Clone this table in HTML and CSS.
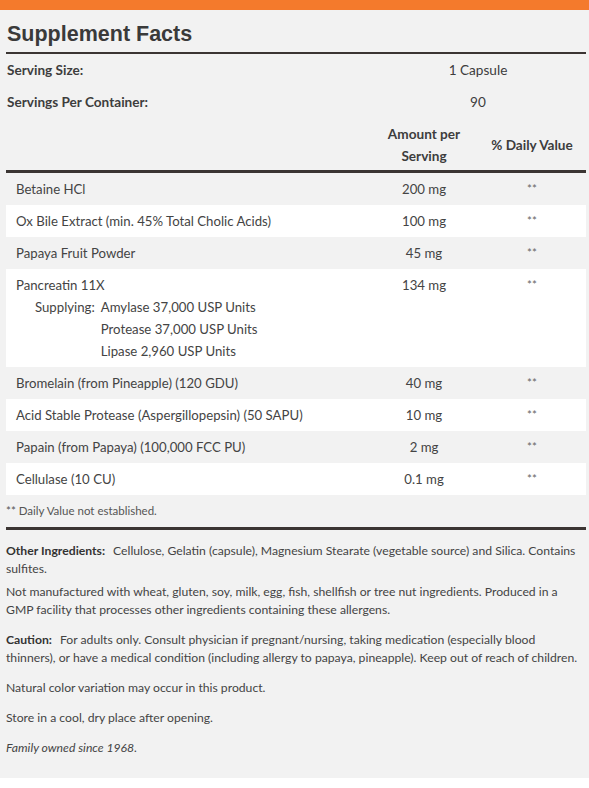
FILE: index.html
```html
<!DOCTYPE html>
<html>
<head>
<meta charset="utf-8">
<link rel="stylesheet" href="styles.css">
</head>
<body>
<div class="topbar"></div>
<div class="panel">
  <h1 class="title">Supplement Facts</h1>
  <div class="facts">
    <div class="serving">
      <div class="label">Serving Size:</div>
      <div class="sval">1 Capsule</div>
    </div>
    <div class="serving">
      <div class="label">Servings Per Container:</div>
      <div class="sval">90</div>
    </div>
    <div class="head">
      <div></div>
      <div class="hcol">Amount per<br>Serving</div>
      <div class="hcol">% Daily Value</div>
    </div>
    <div class="rows">
      <div class="row"><div class="name">Betaine HCl</div><div class="amt">200 mg</div><div class="dv">**</div></div>
      <div class="row"><div class="name">Ox Bile Extract (min. 45% Total Cholic Acids)</div><div class="amt">100 mg</div><div class="dv">**</div></div>
      <div class="row"><div class="name">Papaya Fruit Powder</div><div class="amt">45 mg</div><div class="dv">**</div></div>
      <div class="row"><div class="name">Pancreatin 11X
        <div class="supply"><span class="sup-l">Supplying:</span><span class="sup-r">Amylase 37,000 USP Units<br>Protease 37,000 USP Units<br>Lipase 2,960 USP Units</span></div>
      </div><div class="amt">134 mg</div><div class="dv">**</div></div>
      <div class="row"><div class="name">Bromelain (from Pineapple) (120 GDU)</div><div class="amt">40 mg</div><div class="dv">**</div></div>
      <div class="row"><div class="name">Acid Stable Protease (Aspergillopepsin) (50 SAPU)</div><div class="amt">10 mg</div><div class="dv">**</div></div>
      <div class="row"><div class="name">Papain (from Papaya) (100,000 FCC PU)</div><div class="amt">2 mg</div><div class="dv">**</div></div>
      <div class="row"><div class="name">Cellulase (10 CU)</div><div class="amt">0.1 mg</div><div class="dv">**</div></div>
    </div>
    <div class="footnote">** Daily Value not established.</div>
  </div>
  <div class="notes">
    <p class="tight"><b class="lead">Other Ingredients:</b>Cellulose, Gelatin (capsule), Magnesium Stearate (vegetable source) and Silica. Contains sulfites.</p>
    <p>Not manufactured with wheat, gluten, soy, milk, egg, fish, shellfish or tree nut ingredients. Produced in a GMP facility that processes other ingredients containing these allergens.</p>
    <p><b class="lead">Caution:</b>For adults only. Consult physician if pregnant/nursing, taking medication (especially blood thinners), or have a medical condition (including allergy to papaya, pineapple). Keep out of reach of children.</p>
    <p>Natural color variation may occur in this product.</p>
    <p>Store in a cool, dry place after opening.</p>
    <p class="ital">Family owned since 1968.</p>
  </div>
</div>
</body>
</html>
```
FILE: styles.css
```css
html, body {
  margin: 0;
  padding: 0;
  background: #ffffff;
}
body {
  font-family: "Lato", "Open Sans", sans-serif;
  color: #3d3d3d;
}
.topbar {
  height: 10px;
  background: #f47a2c;
}
.panel {
  background: #f2f2f2;
  padding: 0 3px 21px 6px;
}
.title {
  margin: 0;
  padding: 11px 0 5px 1px;
  font-family: "Liberation Sans", Arial, sans-serif;
  font-weight: 700;
  font-size: 21.5px;
  line-height: 26px;
  color: #3a3a3a;
  border-bottom: 2px solid #3b3533;
}
.serving {
  display: grid;
  grid-template-columns: 1fr 216px;
  height: 32px;
  align-items: center;
  font-size: 13.6px;
}
.label {
  font-weight: 700;
  padding-left: 1px;
}
.sval {
  text-align: center;
}
.head {
  display: grid;
  grid-template-columns: 1fr 108px 108px;
  align-items: center;
  padding: 5px 0 3px;
  font-size: 13.6px;
  line-height: 22px;
  font-weight: 700;
  border-bottom: 3px solid #3b3533;
}
.hcol {
  text-align: center;
}
.row {
  display: grid;
  grid-template-columns: 1fr 108px 108px;
  align-items: start;
  padding: 5px 0;
  font-size: 13.2px;
  line-height: 22px;
  color: #444;
}
.row:nth-child(even) {
  background: #ffffff;
}
.name {
  padding-left: 10px;
}
.amt {
  text-align: center;
}
.dv {
  text-align: center;
  font-size: 11.5px;
  color: #666;
}
.supply {
  display: flex;
  padding-left: 19px;
}
.sup-l {
  margin-right: 6px;
}
.footnote {
  font-size: 11.5px;
  line-height: 16px;
  padding: 8px 0 8px;
  color: #555;
  border-bottom: 3px solid #3b3533;
}
.notes {
  padding-top: 12px;
  font-size: 12.2px;
  line-height: 18px;
  color: #444;
}
.notes p {
  margin: 0 0 12px;
}
.notes p.tight {
  margin-bottom: 5px;
}
.notes p:last-child {
  margin-bottom: 0;
}
.notes .lead {
  font-weight: 700;
  color: #333;
  margin-right: 8px;
}
.ital {
  font-style: italic;
}
```
